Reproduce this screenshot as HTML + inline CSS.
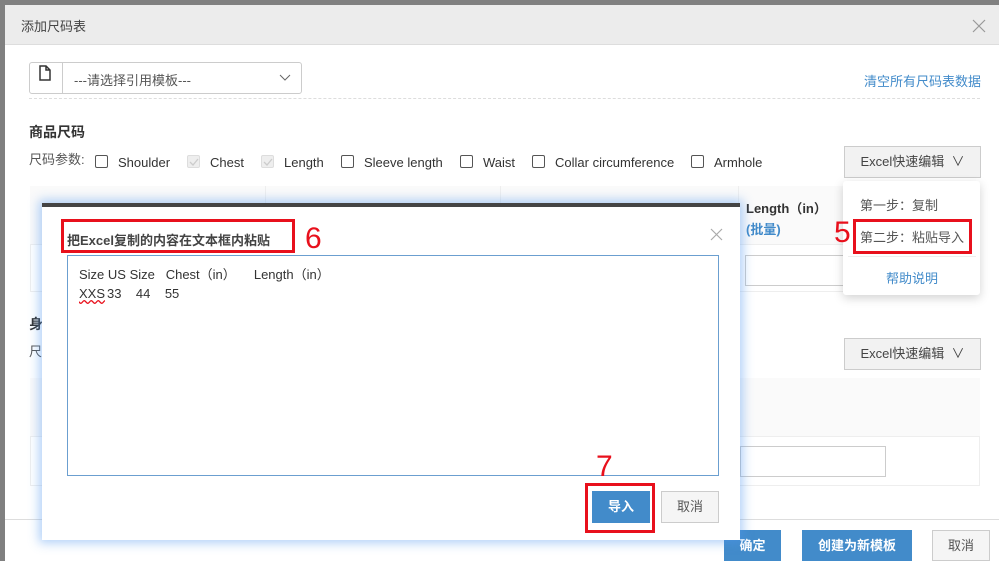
<!DOCTYPE html>
<html><head><meta charset="utf-8"><style>
*{box-sizing:border-box;margin:0;padding:0}
body{width:999px;height:561px;overflow:hidden;background:#808080;font-family:"Liberation Sans","Noto Sans CJK SC",sans-serif;font-size:13px;color:#333;position:relative}
.a{position:absolute}
.cb{position:absolute;width:13px;height:13px;border:1px solid #555;border-radius:2px;background:#fff}
.cbd{border-color:#ddd;background:#eee}
.btn{position:absolute;text-align:center;font-size:13px}
</style></head><body>
<div class="a" style="left:5px;top:5px;width:994px;height:556px;background:#fff"></div>
<div class="a" style="left:5px;top:5px;width:994px;height:40px;background:#ececec;border-bottom:1px solid #ddd"></div>
<div class="a" style="left:21px;top:16px;font-size:13px;color:#444">添加尺码表</div>
<svg class="a" style="left:972px;top:19px" width="14" height="14"><path d="M1 1l12 12M13 1L1 13" stroke="#999" stroke-width="1.2"/></svg>

<div class="a" style="left:29px;top:62px;width:273px;height:32px;border:1px solid #ccc;border-radius:3px"></div>
<div class="a" style="left:62px;top:62px;width:1px;height:32px;background:#ccc"></div>
<svg class="a" style="left:38px;top:65px" width="14" height="16"><path d="M2 1h6l4 4v10H2z M8 1v4h4" fill="none" stroke="#333" stroke-width="1.5"/></svg>
<div class="a" style="left:74px;top:70px;color:#555">---请选择引用模板---</div>
<svg class="a" style="left:279px;top:74px" width="12" height="8"><path d="M1 1l5 5 5-5" fill="none" stroke="#666"/></svg>
<div class="a" style="left:864px;top:71px;color:#428bca">清空所有尺码表数据</div>
<div class="a" style="left:29px;top:98px;width:951px;border-top:1px dashed #ddd"></div>

<div class="a" style="left:29px;top:122px;font-weight:bold;font-size:14px">商品尺码</div>
<div class="a" style="left:29px;top:149px;color:#555">尺码参数:</div>
<div class="cb" style="left:95px;top:155px"></div><div class="a" style="left:118px;top:155px">Shoulder</div>
<div class="cb cbd" style="left:187px;top:155px"></div><svg class="a" style="left:189px;top:158px" width="10" height="8"><path d="M1 4l3 3 5-6" fill="none" stroke="#ccc" stroke-width="1.3"/></svg><div class="a" style="left:210px;top:155px">Chest</div>
<div class="cb cbd" style="left:261px;top:155px"></div><svg class="a" style="left:263px;top:158px" width="10" height="8"><path d="M1 4l3 3 5-6" fill="none" stroke="#ccc" stroke-width="1.3"/></svg><div class="a" style="left:284px;top:155px">Length</div>
<div class="cb" style="left:341px;top:155px"></div><div class="a" style="left:364px;top:155px">Sleeve length</div>
<div class="cb" style="left:460px;top:155px"></div><div class="a" style="left:483px;top:155px">Waist</div>
<div class="cb" style="left:532px;top:155px"></div><div class="a" style="left:555px;top:155px">Collar circumference</div>
<div class="cb" style="left:691px;top:155px"></div><div class="a" style="left:714px;top:155px">Armhole</div>
<div class="btn" style="left:844px;top:146px;width:137px;height:32px;border:1px solid #ccc;background:#f2f2f2;line-height:30px;color:#444">Excel快速编辑 &nbsp;∨</div>

<div class="a" style="left:30px;top:186px;width:950px;height:106px;border:1px solid #eee"></div>
<div class="a" style="left:30px;top:186px;width:950px;height:59px;background:#fafafa;border-bottom:1px solid #eee"></div>
<div class="a" style="left:265px;top:186px;width:1px;height:106px;background:#eee"></div>
<div class="a" style="left:500px;top:186px;width:1px;height:106px;background:#eee"></div>
<div class="a" style="left:738px;top:186px;width:1px;height:106px;background:#eee"></div>
<div class="a" style="left:746px;top:198px;font-weight:bold">Length（in）</div>
<div class="a" style="left:746px;top:219px;font-weight:bold;color:#428bca">(批量)</div>
<div class="a" style="left:745px;top:255px;width:110px;height:31px;border:1px solid #ccc"></div>

<div class="a" style="left:29px;top:314px;font-weight:bold;font-size:14px">身</div>
<div class="a" style="left:29px;top:341px;color:#555">尺</div>
<div class="btn" style="left:844px;top:338px;width:137px;height:32px;border:1px solid #ccc;background:#f2f2f2;line-height:30px;color:#444">Excel快速编辑 &nbsp;∨</div>
<div class="a" style="left:30px;top:378px;width:950px;height:108px;border:1px solid #eee"></div>
<div class="a" style="left:30px;top:378px;width:950px;height:59px;background:#fafafa;border-bottom:1px solid #eee"></div>
<div class="a" style="left:740px;top:446px;width:146px;height:31px;border:1px solid #ccc"></div>

<div class="a" style="left:5px;top:519px;width:994px;border-top:1px solid #ddd"></div>
<div class="btn" style="left:724px;top:530px;width:57px;height:31px;background:#428bca;color:#fff;line-height:31px;font-weight:bold">确定</div>
<div class="btn" style="left:802px;top:530px;width:110px;height:31px;background:#428bca;color:#fff;line-height:31px;font-weight:bold">创建为新模板</div>
<div class="btn" style="left:932px;top:530px;width:58px;height:31px;background:#f5f5f5;border:1px solid #ccc;line-height:29px;color:#555">取消</div>

<!-- dropdown -->
<div class="a" style="left:843px;top:181px;width:137px;height:114px;background:#fff;box-shadow:0 3px 10px rgba(0,0,0,.18);border-radius:3px"></div>
<div class="a" style="left:860px;top:195px;color:#555">第一步：复制</div>
<div class="a" style="left:860px;top:227px;color:#555">第二步：粘贴导入</div>
<div class="a" style="left:853px;top:219px;width:119px;height:35px;border:3px solid #e8101c"></div>
<div class="a" style="left:848px;top:256px;width:128px;border-top:1px solid #eee"></div>
<div class="a" style="left:886px;top:268px;color:#428bca">帮助说明</div>
<div class="a" style="left:834px;top:213px;font-size:30px;color:#e8101c;line-height:40px">5</div>

<!-- inner dialog -->
<div class="a" style="left:42px;top:203px;width:698px;height:337px;background:#fff;border-top:4px solid #444;box-shadow:0 0 10px 3px rgba(80,150,240,.45)"></div>
<div class="a" style="left:67px;top:230px;font-weight:bold;color:#444">把Excel复制的内容在文本框内粘贴</div>
<div class="a" style="left:61px;top:219px;width:234px;height:34px;border:3px solid #e8101c"></div>
<div class="a" style="left:305px;top:219px;font-size:30px;color:#e8101c;line-height:40px">6</div>
<svg class="a" style="left:710px;top:228px" width="13" height="13"><path d="M1 1l11 11M12 1L1 12" stroke="#aaa" stroke-width="1.2"/></svg>
<div class="a" style="left:67px;top:255px;width:652px;height:221px;border:1px solid #6b9fd0"></div>
<div class="a" style="left:79px;top:264px;white-space:pre;color:#333">Size US Size   Chest（in）     Length（in）</div>
<div class="a" style="left:79px;top:286px;white-space:pre;color:#333;text-decoration:underline wavy #e8101c;text-decoration-skip-ink:none">XXS</div>
<div class="a" style="left:107px;top:286px;white-space:pre;color:#333">33    44    55</div>
<div class="a" style="left:596px;top:447px;font-size:30px;color:#e8101c;line-height:40px">7</div>
<div class="a" style="left:585px;top:483px;width:70px;height:50px;border:3px solid #e8101c"></div>
<div class="btn" style="left:592px;top:491px;width:58px;height:32px;background:#428bca;color:#fff;line-height:32px;font-weight:bold">导入</div>
<div class="btn" style="left:661px;top:491px;width:58px;height:32px;background:#f5f5f5;border:1px solid #ccc;line-height:30px;color:#555">取消</div>
</body></html>
